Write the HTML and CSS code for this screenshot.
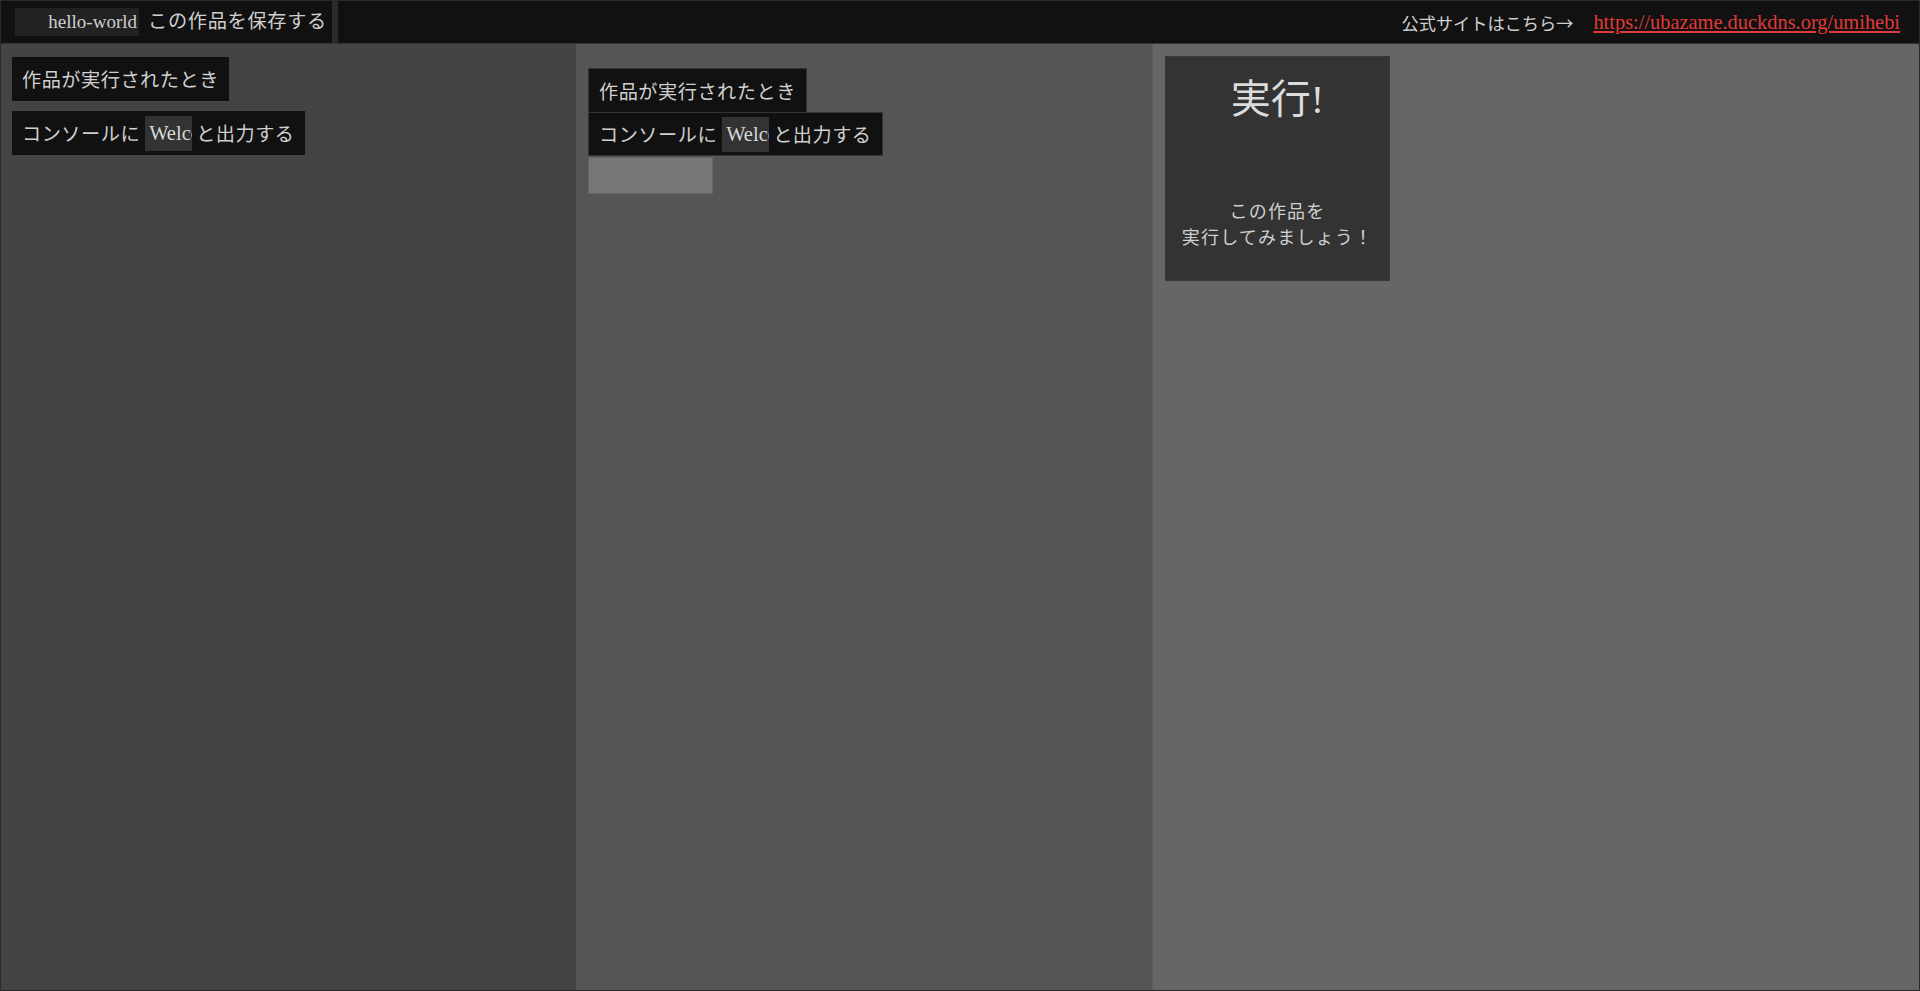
FILE: index.html
```html
<!DOCTYPE html>
<html lang="ja">
<head>
<meta charset="utf-8">
<title>umihebi</title>
<link rel="stylesheet" href="styles.css">
</head>
<body>
<div class="app">
  <header class="header">
    <div class="header-left">
      <input class="name-input" type="text" value="hello-world">
      <span class="save-btn">この作品を保存する</span>
    </div>
    <div class="header-right">
      <span class="site-label">公式サイトはこちら→</span>
      <a class="site-link" href="#">https://ubazame.duckdns.org/umihebi</a>
    </div>
  </header>
  <main class="columns">
    <section class="col col-palette">
      <div class="block">作品が実行されたとき</div>
      <div class="block">コンソールに<input class="slot" type="text" value="Welcome">と出力する</div>
    </section>
    <section class="col col-workspace">
      <div class="stack">
        <div class="block block-tight block-head">作品が実行されたとき</div>
        <div class="block block-tight">コンソールに<input class="slot" type="text" value="Welcome">と出力する</div>
        <div class="drop-slot"></div>
      </div>
    </section>
    <section class="col col-run">
      <div class="run-box">
        <div class="run-title">実行!</div>
        <div class="run-hint">この作品を<br>実行してみましょう！</div>
      </div>
    </section>
  </main>
</div>
</body>
</html>
```
FILE: styles.css
```css
* { box-sizing: border-box; }
html, body {
  margin: 0;
  padding: 0;
  height: 100%;
  background: #111;
  overflow: hidden;
}
body {
  font-family: "Liberation Serif", "Noto Sans CJK JP", serif;
  color: #cfcfcf;
  font-size: 19.2px;
  letter-spacing: 0.5px;
}
.app {
  height: 100vh;
  display: flex;
  flex-direction: column;
  border: 1px solid #2a2a2a;
}
.header {
  height: 43px;
  flex: none;
  display: flex;
  align-items: stretch;
  justify-content: space-between;
  background: #111;
  border-bottom: 1px solid #333;
}
.header-left {
  display: flex;
  align-items: center;
  padding-left: 14px;
  padding-right: 5px;
  border-right: 6px solid #2b2b2b;
}
.name-input {
  width: 124px;
  height: 28px;
  background: #222;
  color: #cfcfcf;
  border: none;
  outline: none;
  text-align: right;
  font-family: "Liberation Serif", serif;
  font-size: 19px;
  letter-spacing: 0;
  padding: 0 2px 0 0;
}
.save-btn {
  margin-left: 9px;
  line-height: 28px;
  letter-spacing: 0.7px;
}
.header-right {
  display: flex;
  align-items: center;
  gap: 20px;
  padding-right: 19px;
}
.site-label {
  font-family: "Noto Sans CJK JP", sans-serif;
  font-size: 17.2px;
  letter-spacing: 0;
}
.site-link {
  color: #e03a3a;
  text-decoration: underline;
  font-size: 20.4px;
  letter-spacing: 0;
}
.columns {
  flex: 1;
  display: grid;
  grid-template-columns: 575px 576px 1fr;
  min-height: 0;
}
.col-palette {
  background: #444;
  padding: 13px 11px;
  display: flex;
  flex-direction: column;
  align-items: flex-start;
  gap: 10px;
}
.col-workspace {
  background: #555;
  padding: 24px 12px;
}
.col-run {
  background: #666;
  border-left: 1px solid #5d5d5d;
  padding: 12px 12px;
}
.block {
  background: #111;
  display: flex;
  align-items: center;
  height: 44px;
  padding: 0 10px;
  white-space: nowrap;
}
.slot {
  width: 47px;
  height: 35px;
  background: #333;
  color: #d8d8d8;
  border: none;
  outline: none;
  font-family: "Liberation Serif", serif;
  font-size: 20.5px;
  letter-spacing: 0;
  padding: 0 0 0 4px;
  margin: 0 4px 0 5px;
}
.stack {
  display: flex;
  flex-direction: column;
  align-items: flex-start;
}
.block-tight {
  border: 1px solid #333;
}
.block-head {
  border-bottom: none;
}
.drop-slot {
  width: 125px;
  height: 37px;
  margin-top: 1px;
  background: #777;
  border: 1px solid #666;
}
.run-box {
  width: 225px;
  height: 225px;
  background: #333;
  border: 1px solid #3a3a3a;
  display: flex;
  flex-direction: column;
  align-items: center;
  text-align: center;
  padding-top: 19px;
}
.run-title {
  font-size: 40px;
  line-height: 48px;
  color: #dcdcdc;
  letter-spacing: 0;
}
.run-hint {
  margin-top: auto;
  margin-bottom: 29px;
  line-height: 26px;
  font-size: 18px;
  letter-spacing: 1.2px;
}
```
